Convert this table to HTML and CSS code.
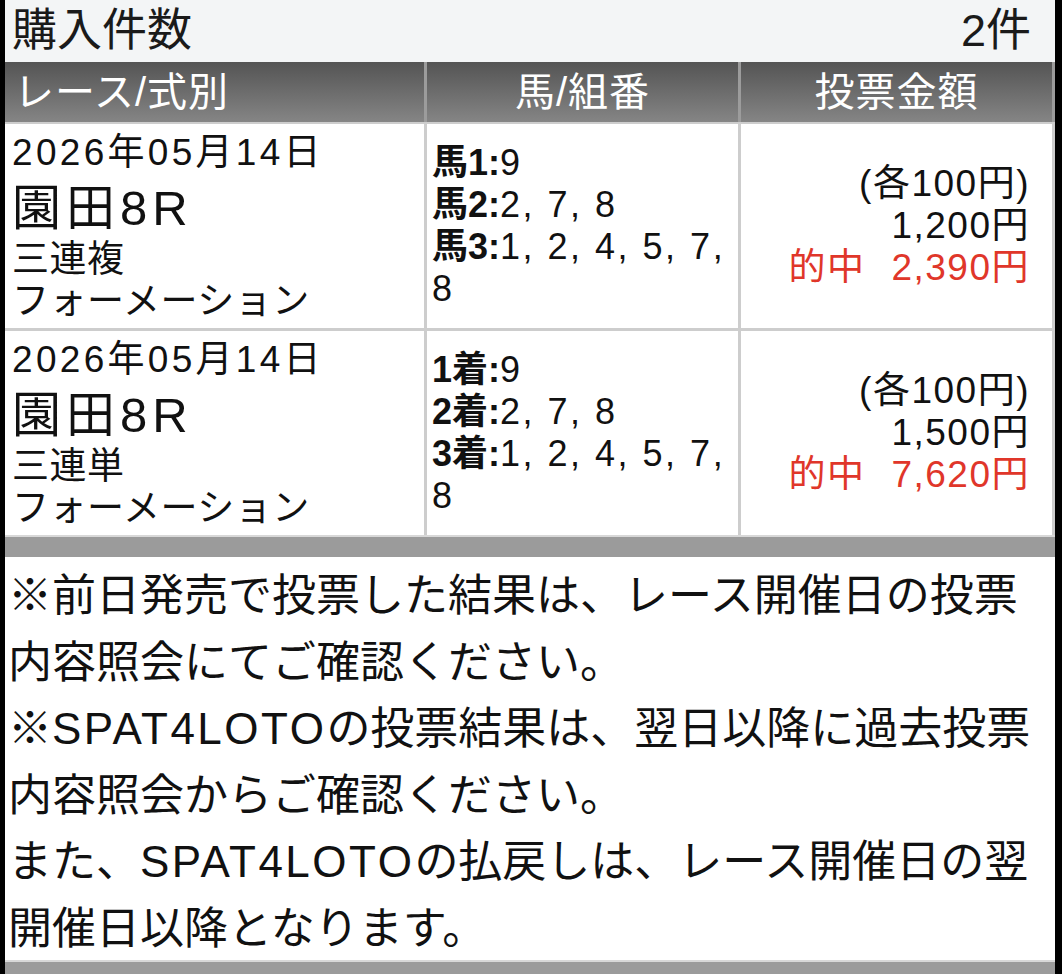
FILE: index.html
```html
<!DOCTYPE html>
<html lang="ja">
<head>
<meta charset="utf-8">
<link rel="stylesheet" href="styles.css">
</head>
<body>
<div class="page">
  <div class="count">
    <span>購入件数</span>
    <span>2件</span>
  </div>
  <div class="table">
    <div class="thead">
      <div class="th th-left">レース/式別</div>
      <div class="th">馬/組番</div>
      <div class="th">投票金額</div>
    </div>
    <div class="gap2"></div>
    <div class="trow">
      <div class="td race">
        <div class="date">2026年05月14日</div>
        <div class="venue">園田8R</div>
        <div class="kind">三連複</div>
        <div class="kind">フォーメーション</div>
      </div>
      <div class="td nums">
        <div><b>馬1:</b>9</div>
        <div><b>馬2:</b>2, 7, 8</div>
        <div><b>馬3:</b>1, 2, 4, 5, 7, 8</div>
      </div>
      <div class="td amount">
        <div>(各100円)</div>
        <div>1,200円</div>
        <div class="hit">的中<span class="hit-val">2,390円</span></div>
      </div>
    </div>
    <div class="sep"></div>
    <div class="trow">
      <div class="td race">
        <div class="date">2026年05月14日</div>
        <div class="venue">園田8R</div>
        <div class="kind">三連単</div>
        <div class="kind">フォーメーション</div>
      </div>
      <div class="td nums">
        <div><b>1着:</b>9</div>
        <div><b>2着:</b>2, 7, 8</div>
        <div><b>3着:</b>1, 2, 4, 5, 7, 8</div>
      </div>
      <div class="td amount">
        <div>(各100円)</div>
        <div>1,500円</div>
        <div class="hit">的中<span class="hit-val">7,620円</span></div>
      </div>
    </div>
  </div>
  <div class="bar"></div>
  <div class="notes">
    <p>※前日発売で投票した結果は、レース開催日の投票内容照会にてご確認ください。</p>
    <p>※<span class="latin">SPAT4LOTO</span>の投票結果は、翌日以降に過去投票内容照会からご確認ください。</p>
    <p>また、<span class="latin">SPAT4LOTO</span>の払戻しは、レース開催日の翌開催日以降となります。</p>
  </div>
  <div class="bar bar-bottom"></div>
</div>
</body>
</html>
```

FILE: styles.css
```css
html, body {
  margin: 0;
  padding: 0;
  background: #000;
}
body {
  font-family: "Liberation Sans", "Noto Sans CJK JP", sans-serif;
  color: #111;
}
.page {
  margin-left: 5px;
  width: 1050px;
  height: 974px;
  background: #fff;
  overflow: hidden;
}
.count {
  height: 62px;
  background: #f3f5f6;
  display: flex;
  justify-content: space-between;
  align-items: center;
  padding: 0 24px 0 7px;
  font-size: 45px;
  line-height: 62px;
  color: #1a1a1a;
}
.table {
  background: #cdcdcd;
}
.thead {
  display: grid;
  grid-template-columns: 419px 311px 311px;
  column-gap: 3px;
  height: 60px;
  background: #9c9c9c;
  padding-right: 3px;
}
.th {
  background: linear-gradient(#545454, #858585);
  color: #fff;
  font-size: 40px;
  line-height: 60px;
  text-align: center;
  letter-spacing: 1px;
}
.th-left {
  text-align: left;
  padding-left: 9px;
}
.gap2 {
  height: 2px;
}
.sep {
  height: 3px;
}
.trow {
  display: grid;
  grid-template-columns: 419px 311px 311px;
  column-gap: 3px;
  height: 204px;
  padding-right: 3px;
}
.td {
  background: #fff;
  display: flex;
  flex-direction: column;
  justify-content: center;
}
.race {
  padding-left: 7px;
  font-size: 37px;
}
.date {
  line-height: 48px;
  letter-spacing: 3.3px;
}
.venue {
  font-size: 49px;
  line-height: 62px;
  letter-spacing: 5px;
}
.kind {
  line-height: 42px;
  letter-spacing: 0.5px;
}
.nums {
  padding-left: 5px;
  padding-right: 10px;
  font-size: 36px;
  line-height: 42px;
  letter-spacing: 2.5px;
}
.nums b {
  font-weight: 700;
  letter-spacing: 0;
}
.amount {
  align-items: flex-end;
  padding-right: 22px;
  font-size: 37px;
  line-height: 42px;
  letter-spacing: 1.5px;
}
.hit {
  color: #e0362a;
}
.hit-val {
  margin-left: 26px;
}
.bar {
  height: 20px;
  background: #9b9b9b;
  border-top: 2px solid #d8d8d8;
}
.notes {
  padding: 6px 17px 0 3px;
  font-size: 44px;
  line-height: 66.5px;
  height: 397px;
  color: #111;
}
.notes p {
  margin: 0;
}
.latin {
  letter-spacing: 2.5px;
}
.bar-bottom {
  height: 30px;
}
```
